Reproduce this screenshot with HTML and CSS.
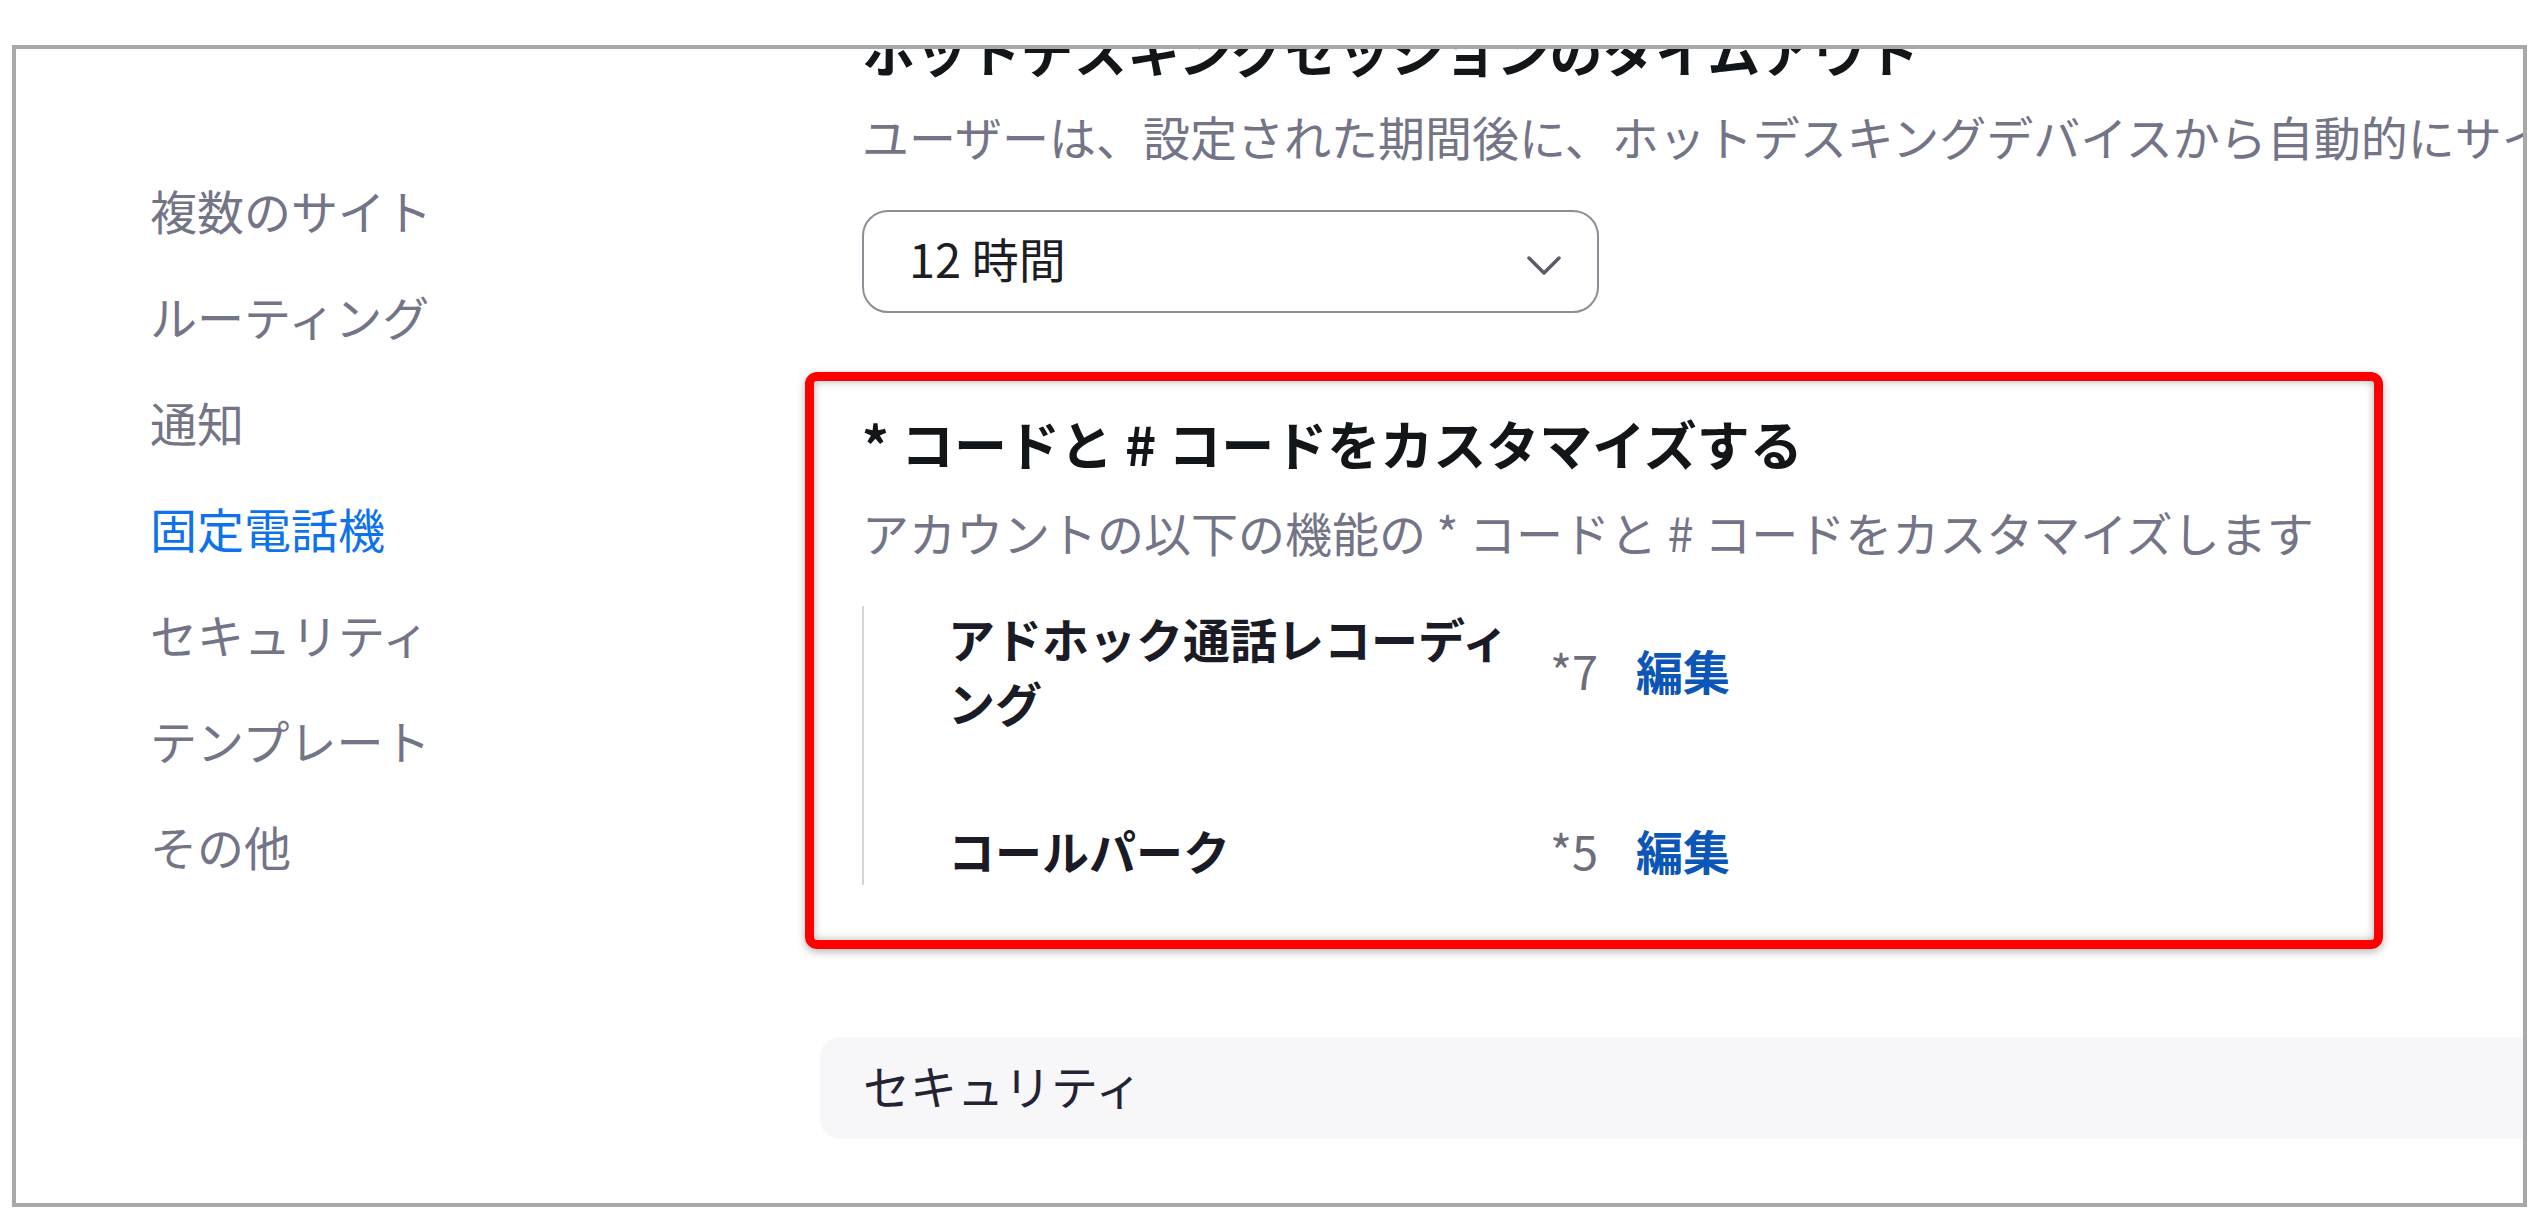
FILE: index.html
```html
<!DOCTYPE html>
<html lang="ja">
<head>
    <meta charset="UTF-8">
    <meta name="viewport" content="width=device-width, initial-scale=1.0">
    <title>電話システム設定</title>
    <link rel="stylesheet" href="styles.css">
</head>
<body>
    <div class="frame">
        <nav class="side-nav">
            <a class="nav-item">複数のサイト</a>
            <a class="nav-item">ルーティング</a>
            <a class="nav-item">通知</a>
            <a class="nav-item active">固定電話機</a>
            <a class="nav-item">セキュリティ</a>
            <a class="nav-item">テンプレート</a>
            <a class="nav-item">その他</a>
        </nav>

        <main class="content">
            <!-- Hot desking timeout -->
            <section class="setting first">
                <h2 class="setting-title">ホットデスキングセッションのタイムアウト</h2>
                <p class="setting-desc single-line">ユーザーは、設定された期間後に、ホットデスキングデバイスから自動的にサインアウトされます。</p>
                <div class="select-box">
                    <span class="select-value">12 時間</span>
                    <svg class="chevron" width="34" height="20" viewBox="0 0 34 20">
                        <polyline points="2,2 17,17 32,2" fill="none" stroke="#5b5b69" stroke-width="3.5" stroke-linecap="round" stroke-linejoin="round"/>
                    </svg>
                </div>
            </section>

            <!-- Star / hash codes (highlighted) -->
            <section class="setting highlight">
                <h2 class="setting-title">* コードと # コードをカスタマイズする</h2>
                <p class="setting-desc">アカウントの以下の機能の * コードと # コードをカスタマイズします</p>
                <ul class="code-list">
                    <li class="code-row">
                        <span class="code-label">アドホック通話レコーディング</span>
                        <span class="code-value">*7</span>
                        <a class="code-edit">編集</a>
                    </li>
                    <li class="code-row">
                        <span class="code-label">コールパーク</span>
                        <span class="code-value">*5</span>
                        <a class="code-edit">編集</a>
                    </li>
                </ul>
            </section>

            <div class="group-bar">セキュリティ</div>
        </main>
    </div>
</body>
</html>
```

FILE: styles.css
```css
/* Page */
body {
    margin: 0;
    background-color: #fff;
    font-family: "Noto Sans CJK JP", "Noto Sans", sans-serif;
    color: #232333;
}

.frame {
    margin: 45px 11px 0 12px;
    height: 1154px;
    border: 4px solid #a8a8a8;
    display: flex;
    overflow: hidden;
    background-color: #fff;
}

/* Left navigation */
.side-nav {
    width: 789px;
    flex-shrink: 0;
    box-sizing: border-box;
    padding: 108px 0 0 134px;
    display: flex;
    flex-direction: column;
}

.nav-item {
    font-size: 47px;
    line-height: 106px;
    color: #747487;
    white-space: nowrap;
}

.nav-item.active {
    color: #0e72ed;
}

/* Main column */
.content {
    flex: 1;
    min-width: 0;
    display: flex;
    flex-direction: column;
}

.setting.first {
    margin-top: -31px;
    padding-left: 57px;
}

.setting-title {
    margin: 0;
    font-size: 53px;
    line-height: 64px;
    font-weight: 700;
    color: #131619;
    white-space: nowrap;
}

.setting-desc {
    margin: 22px 0 0;
    font-size: 47px;
    line-height: 64px;
    color: #747487;
}

.single-line {
    white-space: nowrap;
}

.select-box {
    margin-top: 42px;
    width: 737px;
    height: 103px;
    box-sizing: border-box;
    border: 2px solid #8e8e99;
    border-radius: 26px;
    padding: 0 36px 0 45px;
    display: flex;
    align-items: center;
    justify-content: space-between;
}

.select-value {
    font-size: 47px;
    line-height: 64px;
    color: #1d1d24;
    margin-bottom: 8px;
}

.chevron {
    margin-top: 9px;
}

/* Highlighted section */
.highlight {
    margin: 59px 140px 0 0;
    border: 9px solid #ff0000;
    border-radius: 12px;
    padding: 30px 48px 55px 48px;
    box-shadow: 0 3px 8px rgba(0, 0, 0, 0.28), inset 0 0 8px rgba(0, 0, 0, 0.3);
}

.highlight .setting-desc {
    margin-top: 25px;
}

.code-list {
    list-style: none;
    margin: 42px 0 0;
    padding: 0 0 3px 84px;
    border-left: 2px solid #d5d5d9;
    display: flex;
    flex-direction: column;
    gap: 84px;
}

.code-row {
    display: flex;
    align-items: center;
    font-size: 47px;
    line-height: 64px;
}

.code-label {
    width: 580px;
    margin-right: 22px;
    font-weight: 700;
    color: #1b1b26;
}

.code-value {
    margin-right: 38px;
    color: #6e6e7a;
}

.code-edit {
    font-weight: 700;
    color: #0c56b8;
    cursor: pointer;
}

/* Collapsed group header */
.group-bar {
    margin: 88px 0 0 15px;
    height: 102px;
    box-sizing: border-box;
    padding: 0 0 8px 43px;
    display: flex;
    align-items: center;
    background-color: #f7f7fa;
    border-radius: 20px 0 0 20px;
    font-size: 47px;
    color: #232333;
}
```
